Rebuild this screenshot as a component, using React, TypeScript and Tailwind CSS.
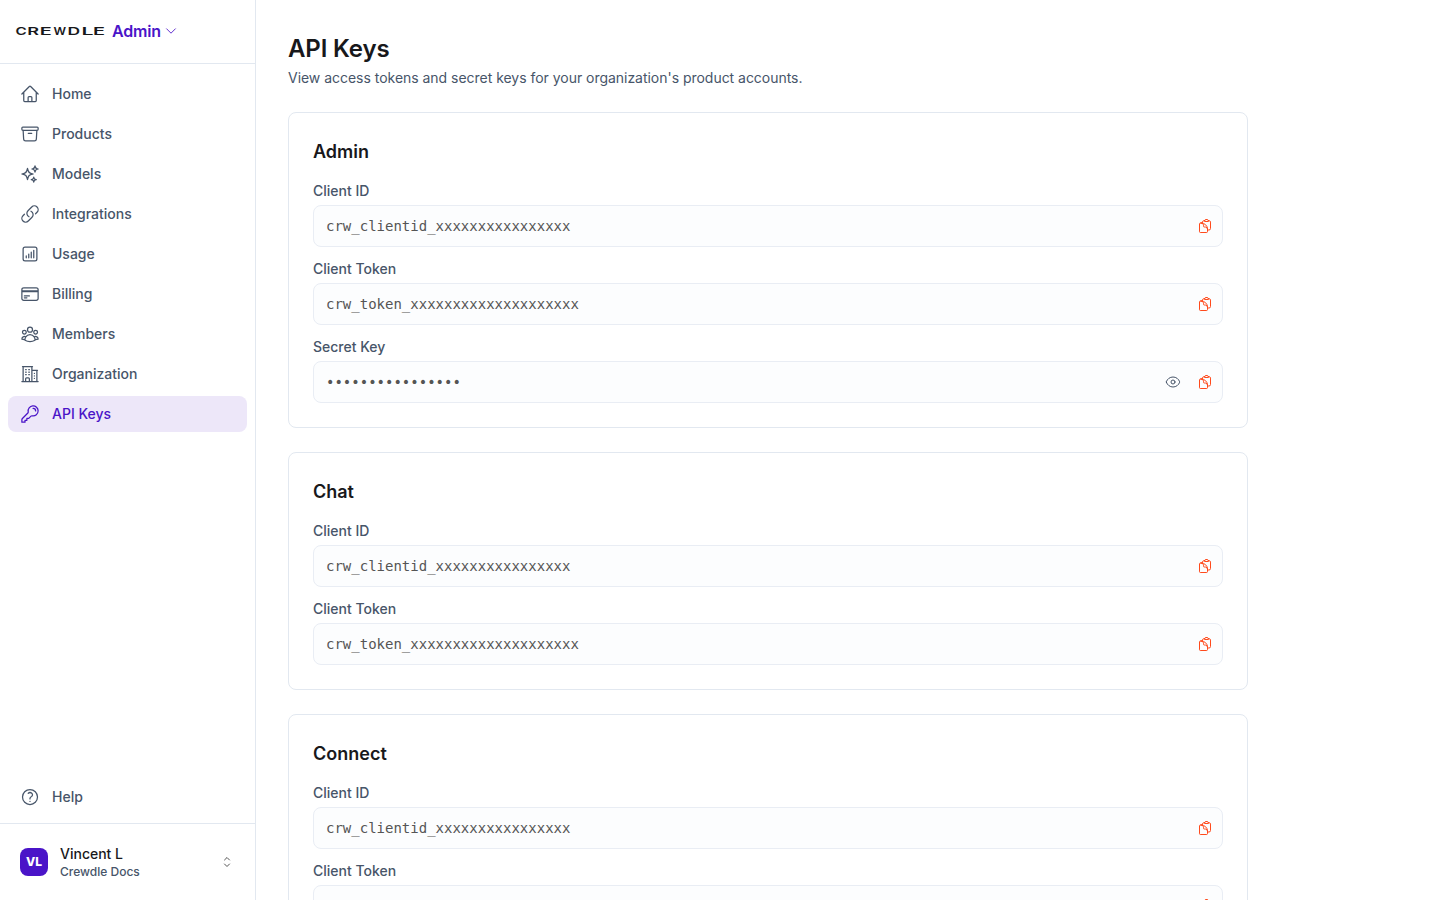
import type { ReactNode } from 'react';
import type { IconType } from 'react-icons';
import {
  HiOutlineArchiveBox,
  HiOutlineBuildingOffice2,
  HiOutlineChartBarSquare,
  HiOutlineChevronDown,
  HiOutlineChevronUpDown,
  HiOutlineClipboardDocument,
  HiOutlineCreditCard,
  HiOutlineEye,
  HiOutlineHome,
  HiOutlineKey,
  HiOutlineLink,
  HiOutlineQuestionMarkCircle,
  HiOutlineSparkles,
  HiOutlineUserGroup,
} from 'react-icons/hi2';

type NavItem = { label: string; icon: IconType };

const navItems: NavItem[] = [
  { label: 'Home', icon: HiOutlineHome },
  { label: 'Products', icon: HiOutlineArchiveBox },
  { label: 'Models', icon: HiOutlineSparkles },
  { label: 'Integrations', icon: HiOutlineLink },
  { label: 'Usage', icon: HiOutlineChartBarSquare },
  { label: 'Billing', icon: HiOutlineCreditCard },
  { label: 'Members', icon: HiOutlineUserGroup },
  { label: 'Organization', icon: HiOutlineBuildingOffice2 },
  { label: 'API Keys', icon: HiOutlineKey },
];

const products = [
  { name: 'Admin', hasSecret: true },
  { name: 'Chat', hasSecret: false },
  { name: 'Connect', hasSecret: false },
];

function NavLink({ label, icon: Icon, active = false }: NavItem & { active?: boolean }) {
  return (
    <a
      href="#"
      className={`flex h-9 items-center gap-3 rounded-lg px-3 text-sm font-medium ${
        active ? 'bg-[#ede7f9] text-[#4a14c8]' : 'text-[#475569]'
      }`}
    >
      <Icon className="size-5 shrink-0" />
      {label}
    </a>
  );
}

const wordmark = [
  { char: 'C', x: -0.6, width: 11.2 },
  { char: 'R', x: 11.2, width: 11.8 },
  { char: 'E', x: 23.8, width: 12 },
  { char: 'W', x: 37.6, width: 12.6 },
  { char: 'D', x: 51.6, width: 12.6 },
  { char: 'L', x: 65.4, width: 12 },
  { char: 'E', x: 77, width: 12 },
];

function Logo() {
  return (
    <svg width="88" height="8" viewBox="0 0 88 8" className="shrink-0 overflow-visible" fill="#18181b">
      <text y="7.2" fontSize="10.2" fontWeight="600" fontFamily="Inter, sans-serif">
        {wordmark.map(({ char, x, width }) => (
          <tspan key={x} x={x} textLength={width} lengthAdjust="spacingAndGlyphs">
            {char}
          </tspan>
        ))}
      </text>
    </svg>
  );
}

function Sidebar() {
  return (
    <aside className="flex w-64 shrink-0 flex-col border-r border-slate-200 bg-white">
      <div className="flex h-16 shrink-0 items-center border-b border-slate-200 px-4">
        <Logo />
        <button className="ml-2 flex items-center gap-[3px] pb-px font-semibold tracking-[-0.01em] text-[#4a14c8]">
          Admin
          <HiOutlineChevronDown className="size-3.5" />
        </button>
      </div>

      <nav className="flex flex-1 flex-col gap-1 px-2 pt-3 pb-2">
        {navItems.map((item) => (
          <NavLink key={item.label} {...item} active={item.label === 'API Keys'} />
        ))}
        <div className="mt-auto">
          <NavLink label="Help" icon={HiOutlineQuestionMarkCircle} />
        </div>
      </nav>

      <div className="flex h-[77px] shrink-0 items-center gap-3 border-t border-slate-200 px-5">
        <div className="flex size-7 items-center justify-center rounded-lg bg-[#4a14c8] text-xs font-extrabold text-white">
          VL
        </div>
        <div className="flex-1">
          <p className="text-sm font-medium text-[#18181b]">Vincent L</p>
          <p className="text-xs leading-4 font-medium text-[#475569]">Crewdle Docs</p>
        </div>
        <HiOutlineChevronUpDown className="size-4 text-[#555555]" />
      </div>
    </aside>
  );
}

function Field({ label, value, children }: { label: string; value: string; children?: ReactNode }) {
  return (
    <div>
      <p className="text-sm font-medium text-[#475569]">{label}</p>
      <div className="mt-1 flex h-[42px] items-center rounded-lg border border-[#e9edf4] bg-[#fcfdfe] pr-[9px] pl-3">
        <span className="flex-1 font-['DejaVu_Sans_Mono',monospace] text-sm text-[#555555]">{value}</span>
        <div className="flex items-center gap-4">
          {children}
          <button aria-label="Copy">
            <HiOutlineClipboardDocument className="size-4 text-[#ff4a1c]" />
          </button>
        </div>
      </div>
    </div>
  );
}

function ProductCard({ name, hasSecret }: { name: string; hasSecret: boolean }) {
  return (
    <section className="rounded-lg border border-slate-200 bg-white p-6">
      <h2 className="pt-px text-lg leading-[27px] font-semibold text-[#18181b]">{name}</h2>
      <div className="mt-4 flex flex-col gap-3">
        <Field label="Client ID" value="crw_clientid_xxxxxxxxxxxxxxxx" />
        <Field label="Client Token" value="crw_token_xxxxxxxxxxxxxxxxxxxx" />
        {hasSecret && (
          <Field label="Secret Key" value="••••••••••••••••">
            <button aria-label="Show">
              <HiOutlineEye className="size-4 text-[#475569]" />
            </button>
          </Field>
        )}
      </div>
    </section>
  );
}

export default function App() {
  return (
    <div className="flex h-screen overflow-hidden bg-white font-['Inter',sans-serif]">
      <Sidebar />
      <main className="flex-1 overflow-hidden p-8">
        <div className="max-w-[960px]">
          <h1 className="pt-px text-2xl leading-[31px] font-semibold tracking-[-0.006em] text-[#18181b]">API Keys</h1>
          <p className="mt-1 text-sm tracking-[-0.002em] text-[#475569]">
            View access tokens and secret keys for your organization's product accounts.
          </p>
          <div className="mt-6 flex flex-col gap-6">
            {products.map((product) => (
              <ProductCard key={product.name} {...product} />
            ))}
          </div>
        </div>
      </main>
    </div>
  );
}
